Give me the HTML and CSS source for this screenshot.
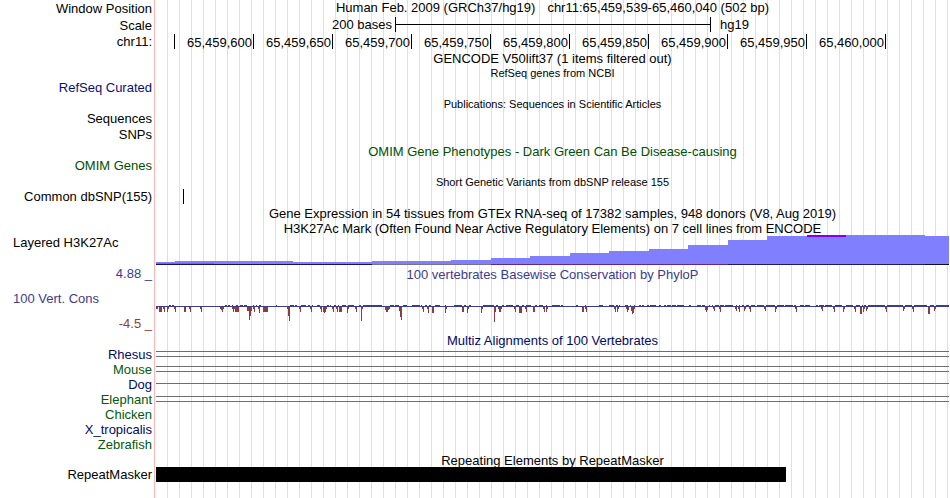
FILE: index.html
```
<!DOCTYPE html>
<html lang="en">
<head>
    <meta charset="UTF-8">
    <meta name="viewport" content="width=device-width, initial-scale=1.0">
    <title>Human chr11:65,459,539-65,460,040</title>
    <link rel="stylesheet" href="styles.css">
</head>
<body>

    <main class="browser">
        <!-- Position, scale bar and ruler -->
        <div class="row ruler-row">
            <div class="label">Window Position</div>
            <div class="position"><span>Human Feb. 2009 (GRCh37/hg19)</span><span>chr11:65,459,539-65,460,040 (502 bp)</span></div>
        </div>
        <div class="row ruler-row">
            <div class="label">Scale</div>
            <div class="scale">
                <span class="scale-size">200 bases</span>
                <span class="scale-bar"></span>
                <span class="scale-db">hg19</span>
            </div>
        </div>
        <div class="row">
            <div class="label ruler-label">chr11:</div>
            <div class="ruler">
                <span></span>
                <span>65,459,600</span>
                <span>65,459,650</span>
                <span>65,459,700</span>
                <span>65,459,750</span>
                <span>65,459,800</span>
                <span>65,459,850</span>
                <span>65,459,900</span>
                <span>65,459,950</span>
                <span>65,460,000</span>
            </div>
        </div>

        <!-- Genes and publications -->
        <div class="row"><div class="title">GENCODE V50lift37 (1 items filtered out)</div></div>
        <div class="row"><div class="title small">RefSeq genes from NCBI</div></div>
        <div class="row spaced"><div class="label refseq">RefSeq Curated</div></div>
        <div class="row"><div class="title small">Publications: Sequences in Scientific Articles</div></div>
        <div class="row spaced"><div class="label">Sequences</div></div>
        <div class="row spaced"><div class="label">SNPs</div></div>
        <div class="row"><div class="title omim">OMIM Gene Phenotypes - Dark Green Can Be Disease-causing</div></div>
        <div class="row spaced"><div class="label omim">OMIM Genes</div></div>

        <!-- Variants -->
        <div class="row"><div class="title small">Short Genetic Variants from dbSNP release 155</div></div>
        <div class="row spaced">
            <div class="label">Common dbSNP(155)</div>
            <svg class="track" viewBox="0 0 793 15" preserveAspectRatio="none">
                <rect x="27" y="0" width="1" height="15"/>
            </svg>
        </div>

        <!-- Regulation -->
        <div class="row"><div class="title">Gene Expression in 54 tissues from GTEx RNA-seq of 17382 samples, 948 donors (V8, Aug 2019)</div></div>
        <div class="row"><div class="title">H3K27Ac Mark (Often Found Near Active Regulatory Elements) on 7 cell lines from ENCODE</div></div>
        <div class="row">
            <div class="label label-left">Layered H3K27Ac</div>
            <svg class="track histone" viewBox="0 0 793 30" preserveAspectRatio="none" shape-rendering="crispEdges">
                <path fill="#8080ff" d="M0 30V27H19V26H137V27H216V26H295V25H335V23H374V21H414V18H453V16H493V14H532V10H572V5H611V1H651V0H769V1H793V30Z"/>
                <path fill="#8000ff" d="M651 0h39v2h-39z"/>
                <path fill="#73739b" d="M0 28h58v1h-58z"/>
                <path fill="#1e0f5a" d="M0 29h216v1h-216z"/>
                <path fill="#77738c" d="M216 29h119v1h-119z"/>
                <path fill="#64287d" d="M335 29h237v1h-237z"/>
                <path fill="#1e1e5f" d="M572 29h197v1h-197z"/>
                <path fill="#0f0f23" d="M769 29h24v1h-24z"/>
            </svg>
        </div>

        <!-- Conservation -->
        <div class="row">
            <div class="axis">
                <span class="cons-up">4.88 _</span>
                <span class="axis-name cons-up">100 Vert. Cons</span>
                <span class="cons-down">-4.5 _</span>
            </div>
            <div class="cons">
                <div class="title cons-up">100 vertebrates Basewise Conservation by PhyloP</div>
                <svg class="track wiggle" viewBox="0 0 793 17" preserveAspectRatio="none" shape-rendering="crispEdges">
                    <rect class="up" x="0" y="1" width="793" height="1"/>
                    <path class="up" id="consUp"/>
                    <path class="down" id="consDown"/>
                </svg>
            </div>
        </div>

        <div class="row"><div class="title navy">Multiz Alignments of 100 Vertebrates</div></div>
        <div class="row"><div class="label navy">Rhesus</div><div class="align-double"></div></div>
        <div class="row"><div class="label green">Mouse</div><div class="align-double"></div></div>
        <div class="row"><div class="label navy">Dog</div><div class="align-single"></div></div>
        <div class="row"><div class="label green">Elephant</div><div class="align-double"></div></div>
        <div class="row"><div class="label green">Chicken</div></div>
        <div class="row"><div class="label navy">X_tropicalis</div></div>
        <div class="row"><div class="label green">Zebrafish</div></div>

        <!-- Repeats -->
        <div class="row"><div class="title">Repeating Elements by RepeatMasker</div></div>
        <div class="row">
            <div class="label">RepeatMasker</div>
            <svg class="track" viewBox="0 0 793 15" preserveAspectRatio="none">
                <rect x="0" y="0" width="630" height="15"/>
            </svg>
        </div>
    </main>

    <script src="script.js"></script>
</body>
</html>
```
FILE: styles.css
```
body {
    margin: 0;
    background-color: #fff;
    color: #000;
    font-family: "Liberation Sans", Arial, Helvetica, sans-serif;
    font-size: 13px;
    line-height: 15px;
}

/* Pink edge of the label column, then a guide line every 12px */
.browser {
    padding: 0 1px 16px 0;
    background-image:
        linear-gradient(#ffb4b4, #ffb4b4),
        repeating-linear-gradient(to right, transparent 0, transparent 11px, #dcdcff 11px, #dcdcff 12px);
    background-repeat: no-repeat;
    background-position: 154px 0, 156px 0;
    background-size: 1px 100%, 100% 100%;
}

.row {
    display: grid;
    grid-template-columns: 156px minmax(0, 1fr);
    min-height: 15px;
}
.spaced {
    margin-bottom: 1px;
}
.ruler-row {
    min-height: 17px;
}

.label {
    grid-column: 1;
    padding-right: 4px;
    text-align: right;
    white-space: nowrap;
}
.label-left {
    padding-left: 13px;
    text-align: left;
}
.ruler-row .label {
    line-height: 17px;
}
.ruler-label {
    line-height: 16px;
}
.title {
    grid-column: 2;
    height: 15px;
    line-height: 17px;
    text-align: center;
    white-space: nowrap;
}
.small {
    font-size: 11px;
}
.position {
    display: flex;
    justify-content: center;
    gap: 12px;
    white-space: nowrap;
}

/* Scale bar */
.scale {
    display: grid;
    grid-template-columns: 239fr 316fr 238fr;
}
.scale-size {
    padding-right: 3px;
    text-align: right;
}
.scale-bar {
    height: 15px;
    box-sizing: border-box;
    border: solid #000;
    border-width: 0 1px;
    background: linear-gradient(#000, #000) center / 100% 1px no-repeat;
}
.scale-db {
    padding-left: 9px;
}

/* Base position ticks */
.ruler {
    display: grid;
    grid-template-columns: 19fr repeat(9, 79fr) 63fr;
    height: 16px;
}
.ruler span {
    height: 15px;
    min-width: 0;
    padding-right: 1px;
    border-right: 1px solid #000;
    line-height: 17px;
    text-align: right;
    white-space: nowrap;
}

/* Tracks */
.track {
    display: block;
    width: 100%;
    height: 15px;
}
.histone {
    height: 30px;
}
.axis {
    display: flex;
    flex-direction: column;
    justify-content: space-between;
    padding: 1px 4px 1px 0;
    text-align: right;
}
.axis-name {
    padding-left: 13px;
    text-align: left;
}
.cons {
    padding: 1px 0 10px;
}
.wiggle {
    height: 17px;
    margin-top: 24px;
}
.up {
    fill: #3c3c8c;
}
.down {
    fill: #8c3c3c;
}
.align-double {
    height: 4px;
    margin-top: 4px;
    border: solid #6e6e6e;
    border-width: 1px 0;
}
.align-single {
    height: 1px;
    margin-top: 6px;
    background-color: #6e6e6e;
}

/* Track colours */
.refseq {
    color: #0c0c78;
}
.omim {
    color: #005000;
}
.navy {
    color: #000a64;
}
.green {
    color: #005a0a;
}
.cons-up {
    color: #3c3c8c;
}
.cons-down {
    color: #8c3c3c;
}
```
FILE: script.js
```
// Conserved stretches: start and end of each run
var conserved = [
    [13,15],[16,18],[69,71],[72,74],[76,77],[80,82],[84,87],[88,91],[97,98],[100,101],[103,105],[120,121],
    [134,138],[139,141],[145,150],[152,154],[156,157],[161,164],[171,173],[174,175],[178,180],[182,183],
    [186,190],[192,198],[203,205],[207,226],[234,238],[239,243],[247,251],[256,264],[265,266],[269,271],
    [273,275],[279,284],[289,290],[298,306],[308,310],[313,315],[327,338],[340,342],[346,348],[350,357],
    [360,363],[366,368],[370,375],[379,381],[383,387],[390,391],[396,404],[405,407],[420,422],[429,430],
    [443,447],[453,458],[460,462],[463,464],[469,472],[474,475],[478,479],[483,485],[486,488],[491,493],
    [494,500],[503,505],[508,510],[511,515],[516,520],[521,528],[533,535],[541,545],[546,549],[553,554],
    [556,557],[559,563],[564,568],[569,577],[580,581],[583,584],[586,588],[590,593],[595,599],[601,608],
    [610,619],[621,628],[629,637],[638,640],[644,648],[649,654],[660,662],[663,668],[669,676],[679,686],
    [690,697],[700,704],[706,707],[708,710],[712,729],[731,747],[749,756],[758,771],[774,778],[780,793]
];

// Fast-evolving bases: start, then the depth of each base
var accelerated = [
    [0,2,2],[3,5,5,5],[7,2,5],[11,5,2],[18,2,5],[28,5,5],[33,2,5],[44,2,5],[64,2,3,5,2],[76,2,5],
    [78,2,5,5,5,5],[91,4,4,13,9,4],[97,2,5],[102,2,6],[107,5,5,5,5,5],[131,2,9,14],[143,2,5],[154,2,5],
    [164,2,5],[167,5,6,5,2],[176,2,5],[180,2,5],[183,5,5,5],[191,6,2],[199,2,5],[205,14,2],
    [229,3,5,5,3,2],[243,4,10,13],[266,2,5],[271,2,6],[276,6,6],[289,6,2],[306,5,5],[311,6,2],[325,6,2],
    [338,15,5],[342,2,5,5,2],[358,2,5],[363,6,6,6],[369,2,5],[377,5,5],[387,2,5],[390,5,2],[426,5,5],
    [429,2,5],[458,2,5],[461,5,2],[470,2,5,3],[475,4,7,6,2],[549,3,5,3],[557,2,4],[563,2,5],[579,2,4],
    [582,2,5],[588,4,2],[593,2,5],[608,2,4],[619,5,2],[639,2,5],[665,2,4],[677,2,5],[687,5,2],[698,2,5],
    [704,7,7],[707,5,2],[710,4,2],[729,2,5],[747,4,2],[756,2,5],[772,7,7],[778,4,2]
];

var up = "";
conserved.forEach(function(run) {
    up += "M" + run[0] + " 0H" + run[1] + "V1H" + run[0] + "Z";
});
document.getElementById("consUp").setAttribute("d", up);

var down = "";
accelerated.forEach(function(dip) {
    dip.slice(1).forEach(function(depth, i) {
        down += "M" + (dip[0] + i) + " 2h1v" + depth + "h-1z";
    });
});
document.getElementById("consDown").setAttribute("d", down);
```
